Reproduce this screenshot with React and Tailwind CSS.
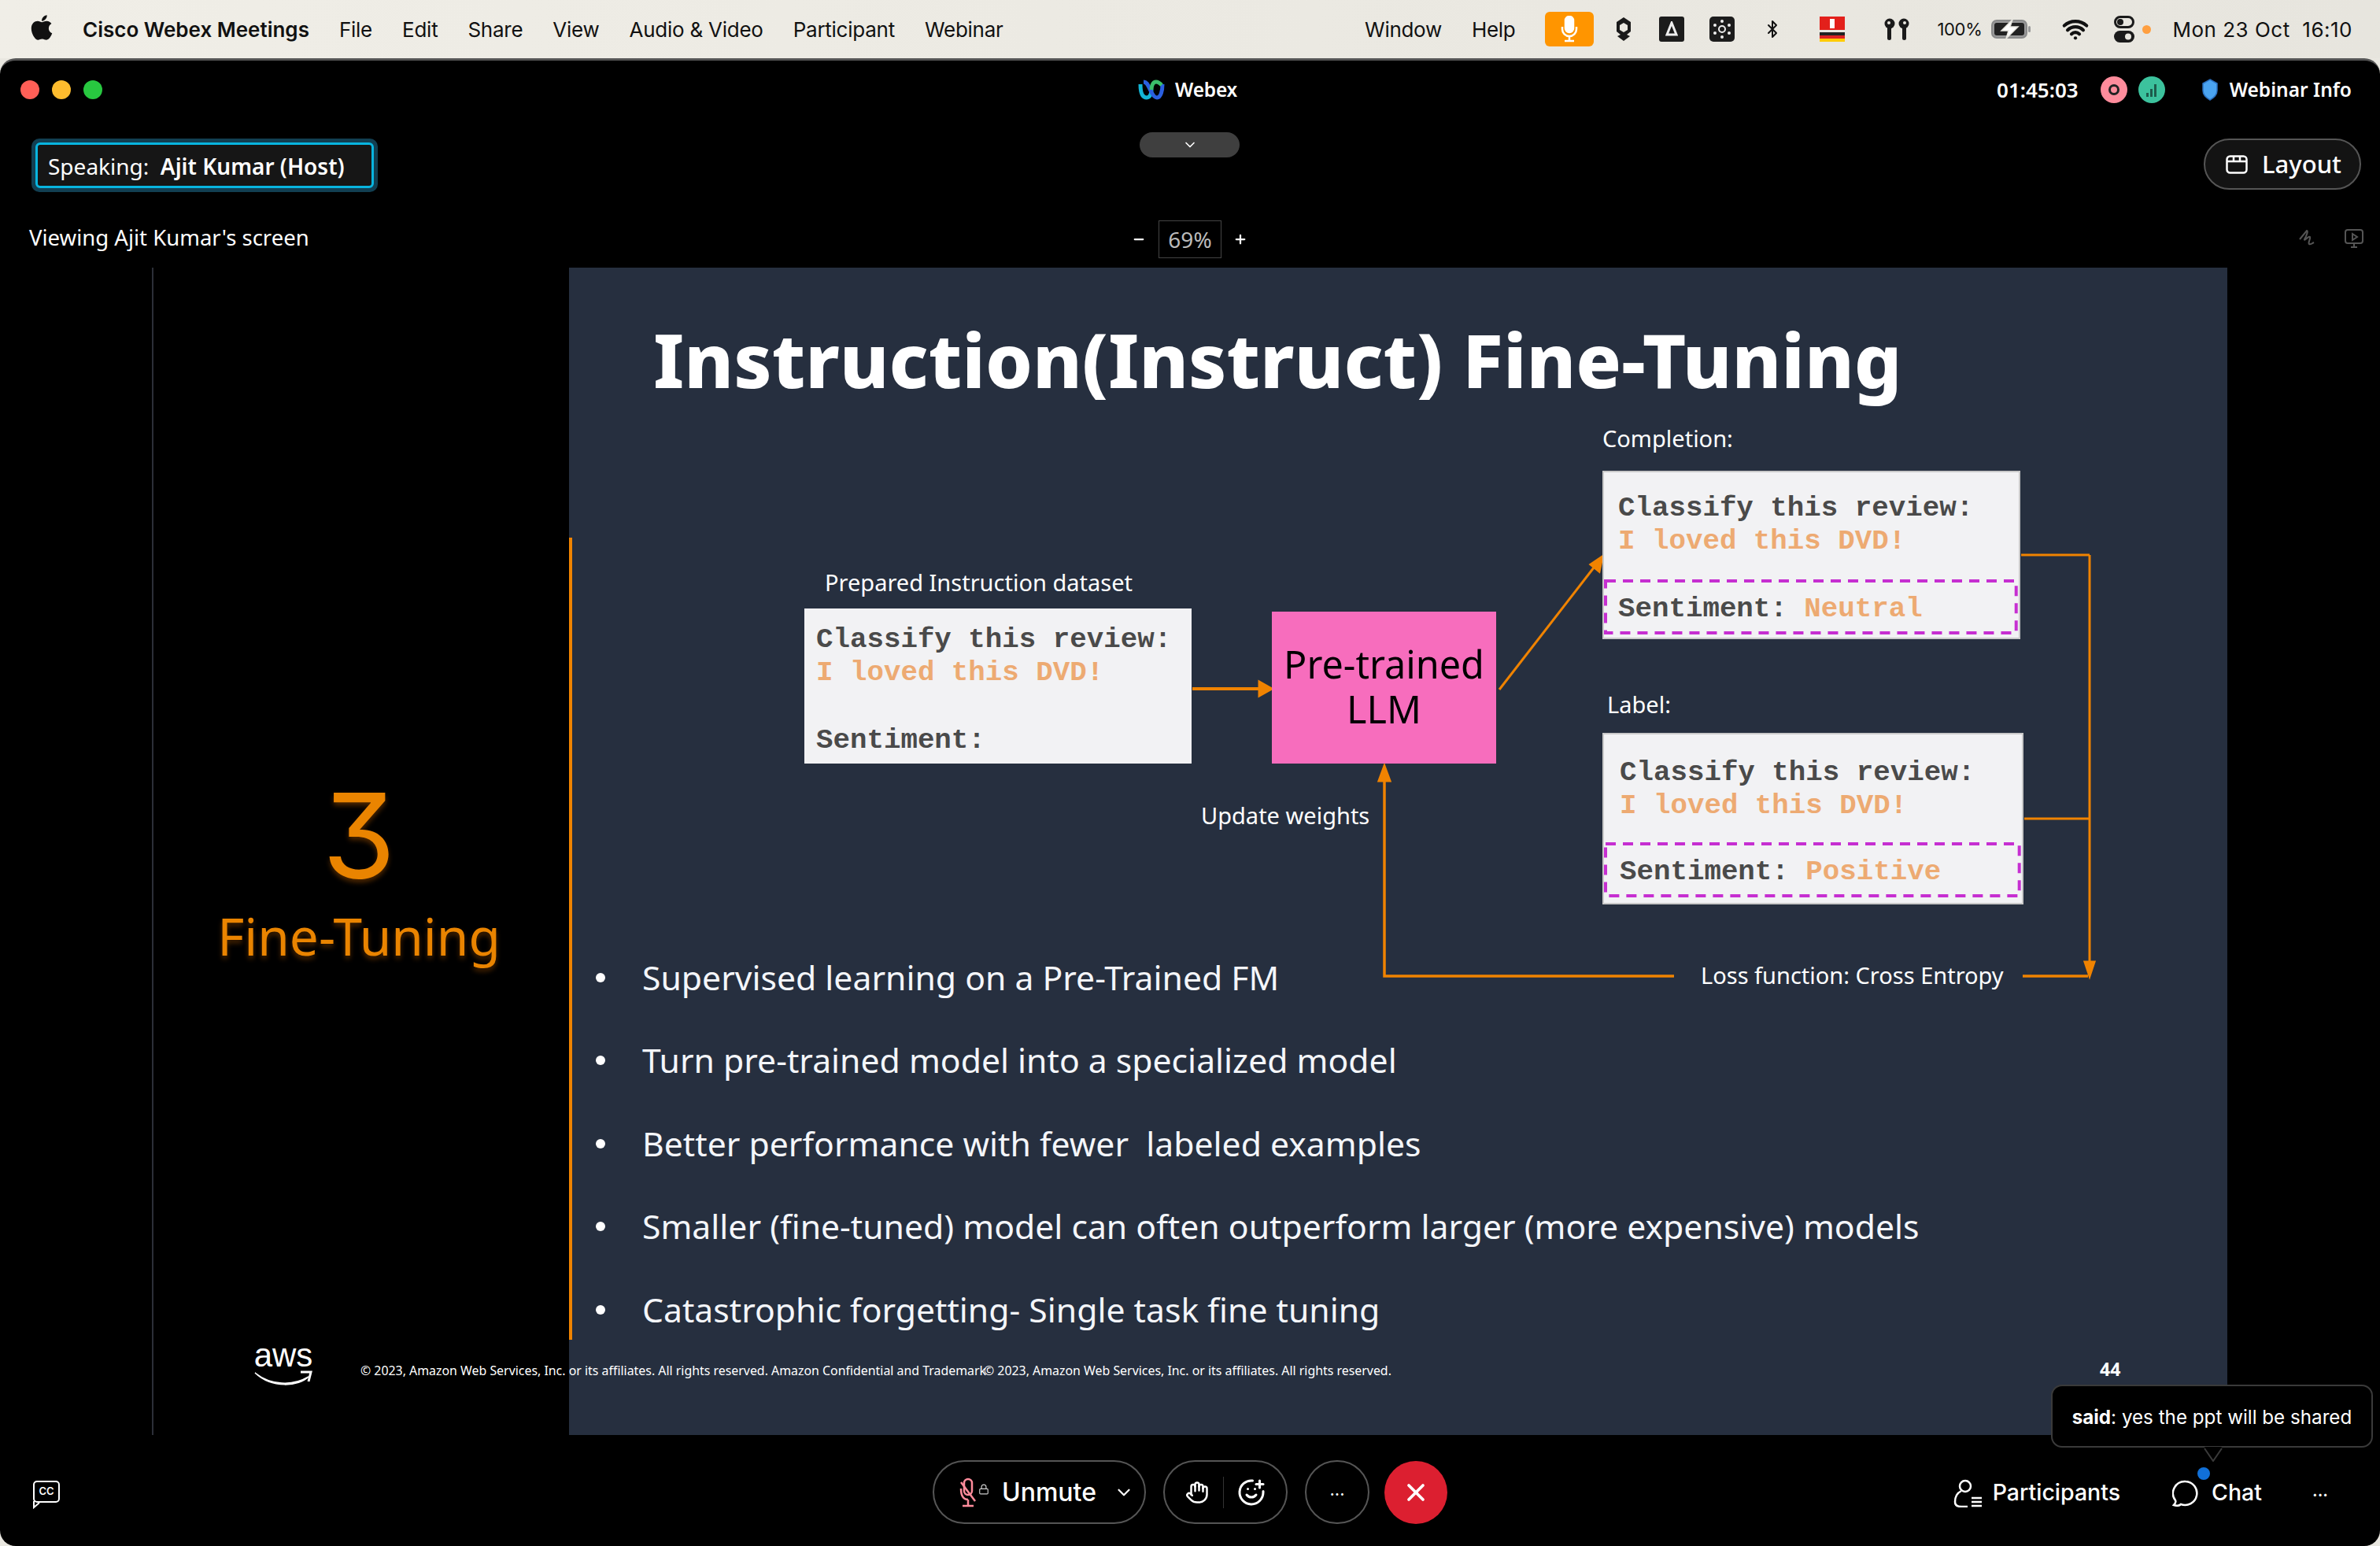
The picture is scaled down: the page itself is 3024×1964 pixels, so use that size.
import React from 'react';
import { FaApple } from 'react-icons/fa';
import { Bluetooth, ChevronDown, Hand, Lock, Minus, Plus, SmilePlus, Wifi, X } from 'lucide-react';

const ui = "font-['Inter','Liberation_Sans',sans-serif]";
const slideFont = "font-['Noto_Sans','Open_Sans',sans-serif]";

const menuItems = ['File', 'Edit', 'Share', 'View', 'Audio & Video', 'Participant', 'Webinar'];

const bullets = [
  'Supervised learning on a Pre-Trained FM',
  'Turn pre-trained model into a specialized model',
  'Better performance with fewer  labeled examples',
  'Smaller (fine-tuned) model can often outperform larger (more expensive) models',
  'Catastrophic forgetting- Single task fine tuning',
];

function MenuBar() {
  return (
    <div className={`${ui} h-[74px] flex items-center bg-gradient-to-r from-[#f0eee7] to-[#e7e5de] text-[#111] text-[26px] pl-[37px] pr-[35px]`}>
      <FaApple className="w-[32px] h-[36px] -mt-[4px]" />
      <span className="ml-[36px] font-semibold">Cisco Webex Meetings</span>
      <div className="flex gap-[38px] ml-[38px] tracking-[-0.25px]">
        {menuItems.map((m) => (
          <span key={m}>{m}</span>
        ))}
      </div>
      <div className="ml-auto flex items-center tracking-[-0.3px]">
        <span>Window</span>
        <span className="ml-[38px]">Help</span>
        <div className="ml-[38px] w-[62px] h-[44px] rounded-[6px] bg-[#ff9500] flex items-center justify-center">
          <svg width="24" height="34" viewBox="0 0 24 34" fill="none" stroke="#fff" strokeWidth="2.5">
            <rect x="7" y="1" width="10" height="20" rx="5" fill="#fff" />
            <path d="M3 14v3a9 9 0 0 0 18 0v-3M12 26v6M6 32h12" />
          </svg>
        </div>
        <svg className="ml-[26px]" width="24" height="32" viewBox="0 0 24 32">
          <path d="M12 1 21 7v12l-5 4 4 2-8 6-8-6 4-2-5-4V7z" fill="#1a1a1a" />
          <path d="M12 8l5 3v6l-5 3-5-3v-6z" fill="#e9e7e0" />
        </svg>
        <div className="ml-[33px] w-[32px] h-[32px] rounded-[3px] bg-[#1c1c1c] flex items-center justify-center">
          <svg width="16" height="20" viewBox="0 0 16 20">
            <path d="M8 2 14 17H2z" fill="none" stroke="#eee" strokeWidth="3" />
          </svg>
        </div>
        <div className="ml-[32px] w-[32px] h-[32px] rounded-[5px] bg-[#1c1c1c] flex items-center justify-center">
          <svg width="26" height="26" viewBox="0 0 26 26" fill="#eee">
            <circle cx="13" cy="13" r="4" fill="none" stroke="#eee" strokeWidth="2" />
            <circle cx="13" cy="3" r="2" />
            <circle cx="13" cy="23" r="2" />
            <circle cx="4" cy="8" r="2" />
            <circle cx="22" cy="8" r="2" />
            <circle cx="4" cy="18" r="2" />
            <circle cx="22" cy="18" r="2" />
          </svg>
        </div>
        <Bluetooth className="ml-[36px] w-[24px] h-[32px]" strokeWidth={2} />
        <div className="ml-[48px] w-[32px] h-[32px] flex flex-col">
          <div className="h-[17px] bg-[#e3201b] flex items-center justify-center">
            <div className="w-[6px] h-[12px] bg-white" />
          </div>
          <div className="h-[3px]" />
          <div className="h-[4px] bg-[#222]" />
          <div className="h-[4px] bg-[#d22]" />
          <div className="h-[4px] bg-[#fc0]" />
        </div>
        <svg className="ml-[48px]" width="36" height="28" viewBox="0 0 36 28" fill="#1a1a1a">
          <circle cx="9" cy="7" r="6.5" />
          <rect x="6" y="8" width="5" height="20" rx="2.5" />
          <circle cx="27" cy="7" r="6.5" />
          <rect x="25" y="8" width="5" height="20" rx="2.5" />
          <circle cx="8" cy="6" r="2" fill="#e9e7e0" />
          <circle cx="28" cy="6" r="2" fill="#e9e7e0" />
        </svg>
        <span className="ml-[33px] text-[22px]">100%</span>
        <svg className="ml-[12px]" width="50" height="24" viewBox="0 0 50 24">
          <rect x="1" y="1" width="44" height="22" rx="6" fill="#999" stroke="#8a8a8a" strokeWidth="2" />
          <rect x="4" y="4" width="38" height="16" rx="3" fill="#222" />
          <path d="M27 0 13 14h9l-3 10 15-15h-10z" fill="#fff" stroke="#e8e6df" strokeWidth="1.5" />
          <rect x="47" y="8" width="3" height="8" rx="1.5" fill="#999" />
        </svg>
        <Wifi className="ml-[38px] w-[38px] h-[34px]" strokeWidth={3} />
        <svg className="ml-[30px]" width="26" height="34" viewBox="0 0 26 34">
          <rect x="1.5" y="1.5" width="23" height="13" rx="6.5" fill="none" stroke="#1a1a1a" strokeWidth="3" />
          <circle cx="8" cy="8" r="4" fill="#1a1a1a" />
          <rect x="0" y="19" width="26" height="15" rx="7.5" fill="#1a1a1a" />
          <circle cx="18" cy="26.5" r="4" fill="#e9e7e0" />
        </svg>
        <div className="ml-[10px] w-[11px] h-[11px] rounded-full bg-[#ff9f40]" />
        <span className="ml-[27px] whitespace-pre tracking-[0.5px]">Mon 23 Oct  16:10</span>
      </div>
    </div>
  );
}

function TitleBar() {
  return (
    <div className="relative h-[74px] flex items-center text-white">
      <div className="flex gap-[16px] ml-[26px]">
        <div className="w-[24px] h-[24px] rounded-full bg-[#ff5f57]" />
        <div className="w-[24px] h-[24px] rounded-full bg-[#febc2e]" />
        <div className="w-[24px] h-[24px] rounded-full bg-[#28c840]" />
      </div>
      <div className="ml-[1316px] flex items-center gap-[13px]">
        <svg width="34" height="26" viewBox="0 0 34 26" fill="none" strokeWidth="5">
          <path d="M3 6c0 12 3 17 8 17s6-7 6-10" stroke="#13b5d6" />
          <path d="M7 3c5 0 6 6 10 13 2 4 4 7 7 7 5 0 7-9 7-17" stroke="#2a5fe0" />
          <path d="M17 13c0-3 1-10 6-10 3 0 5 2 7 4" stroke="#3bbf6a" />
        </svg>
        <span className="text-[24.5px] font-semibold tracking-[-0.2px]">Webex</span>
      </div>
      <div className="ml-auto mr-[36px] flex items-center">
        <span className="text-[26px] font-semibold">01:45:03</span>
        <div className="ml-[28px] w-[34px] h-[34px] rounded-full bg-[#ff8c9c] flex items-center justify-center">
          <div className="w-[14px] h-[14px] rounded-full border-[3px] border-[#222]" />
        </div>
        <div className="ml-[14px] w-[34px] h-[34px] rounded-full bg-[#3cc29d] flex items-end justify-center gap-[2px] pb-[8px]">
          <div className="w-[3px] h-[5px] bg-[#1d5c4c]" />
          <div className="w-[3px] h-[10px] bg-[#1d5c4c]" />
          <div className="w-[3px] h-[16px] bg-[#1d5c4c]" />
        </div>
        <svg className="ml-[46px]" width="22" height="28" viewBox="0 0 22 28">
          <path d="M11 1 20 6v9c0 6-4 9-9 12-5-3-9-6-9-12V6z" fill="#4aa3f0" stroke="#2a6fc0" strokeWidth="1.5" />
        </svg>
        <span className="ml-[14px] text-[24.5px] font-semibold">Webinar Info</span>
      </div>
    </div>
  );
}

function ToolRow() {
  return (
    <div className="relative h-[85px] text-white">
      <div className="absolute left-[40px] top-[25px] w-[440px] h-[68px] rounded-[10px] bg-[#123f52] p-[5px]">
        <div className="h-full rounded-[6px] border-[3px] border-[#08b5e0] bg-[#161616] flex items-center pl-[13px] pt-[2px] text-[28px] whitespace-pre">
          Speaking:  <span className="font-semibold">Ajit Kumar (Host)</span>
        </div>
      </div>
      <div className="absolute left-[1448px] top-[17px] w-[127px] h-[32px] rounded-full bg-[#3f3f3f] flex items-center justify-center">
        <ChevronDown className="w-[20px] h-[20px] text-white" strokeWidth={2} />
      </div>
      <div className="absolute right-[24px] top-[25px] w-[200px] h-[65px] rounded-full border-2 border-[#555] bg-[#131313] flex items-center justify-center gap-[18px] pl-[3px]">
        <svg width="28" height="24" viewBox="0 0 28 24" fill="none" stroke="#fff" strokeWidth="2.5">
          <rect x="1.5" y="1.5" width="25" height="21" rx="4" />
          <path d="M1.5 8h25M10 1.5V8M18 1.5V8" />
        </svg>
        <span className="text-[31px] font-medium">Layout</span>
      </div>
    </div>
  );
}

function ZoomRow() {
  return (
    <div className="relative h-[104px] flex items-center text-white pt-[28px]">
      <span className="ml-[37px] text-[27.5px]">Viewing Ajit Kumar's screen</span>
      <div className="absolute left-[1438px] top-[44px] flex items-center">
        <Minus className="w-[18px] h-[18px]" strokeWidth={3} />
        <div className="ml-[16px] w-[80px] h-[48px] border border-[#444] flex items-center justify-center text-[28px] text-[#bbb]">
          69%
        </div>
        <Plus className="ml-[15px] w-[18px] h-[18px]" strokeWidth={3} />
      </div>
      <div className="absolute right-[20px] top-[54px] flex items-center gap-[34px]">
        <svg width="24" height="26" viewBox="0 0 24 26" fill="none" stroke="#555" strokeWidth="2">
          <path d="M2 14 11 3c2 0 0 6-3 11-1 3 6-5 7-3 1 3-3 7-1 9 2 1 4-1 6-2" />
        </svg>
        <svg width="26" height="26" viewBox="0 0 26 26" fill="none" stroke="#555" strokeWidth="2">
          <rect x="2" y="2" width="22" height="17" rx="3" />
          <path d="M9 24h8M13 19v5M11 7l6 4-6 4z" />
        </svg>
      </div>
    </div>
  );
}

function MonoBox({ className, children }) {
  return (
    <div className={`absolute bg-[#f2f2f4] font-['Liberation_Mono',monospace] font-bold text-[35.8px] leading-[42px] text-[#4a4a4a] whitespace-pre ${className}`}>
      {children}
    </div>
  );
}

function DashedLine({ className, label, value }) {
  return (
    <div className={`relative h-[70px] flex items-center pt-[6px] ${className}`}>
      <svg className="absolute left-0 top-0 w-full h-full" fill="none" stroke="#c62fd1" strokeWidth="4">
        <rect x="2" y="2" width="99%" height="66" strokeDasharray="13 9" />
      </svg>
      {label}
      <span className="text-[#edaa72]">{value}</span>
    </div>
  );
}

function Diagram() {
  return (
    <div className="relative h-[669px] text-white text-[29px]">
      <svg className="absolute left-0 top-0 overflow-visible" width="2107" height="760" viewBox="0 0 2107 760" fill="none" stroke="#f08300" strokeWidth="3">
        <path d="M792 355H880" strokeWidth="4" />
        <path d="M893 355 877 346v18z" fill="#f08300" />
        <path d="M1182 356 1306 196" />
        <path d="M1313 187 1298 197 1309 206z" fill="#f08300" />
        <path d="M1845 185H1932M1849 520H1932M1932 185V708" />
        <path d="M1932 720 1926 702H1938z" fill="#f08300" />
        <path d="M1847 720H1930" strokeWidth="3.5" />
        <path d="M1404 720H1036V470" strokeWidth="3.5" />
        <path d="M1036 453 1029 472H1043z" fill="#f08300" />
      </svg>

      <span className="absolute left-[325px] top-[198px]">Prepared Instruction dataset</span>
      <span className="absolute left-[1313px] top-[15px]">Completion:</span>
      <span className="absolute left-[1319px] top-[353px]">Label:</span>
      <span className="absolute left-[803px] top-[494px]">Update weights</span>
      <span className="absolute left-[1438px] top-[697px]">Loss function: Cross Entropy</span>

      <MonoBox className="left-[299px] top-[253px] w-[492px] h-[197px] pl-[15px] pt-[19px]">
        <div>Classify this review:</div>
        <div className="text-[#edaa72]">I loved this DVD!</div>
        <div className="mt-[44px]">Sentiment:</div>
      </MonoBox>

      <div className={`absolute left-[893px] top-[257px] w-[285px] h-[193px] bg-[#f76dbd] text-black text-[48.5px] leading-[57px] flex flex-col items-center justify-center pb-[4px] ${slideFont}`}>
        <span>Pre-trained</span>
        <span>LLM</span>
      </div>

      <MonoBox className="left-[1313px] top-[78px] w-[531px] h-[214px] border-2 border-[#c9c9c9] pt-[25px]">
        <div className="pl-[18px]">Classify this review:</div>
        <div className="pl-[18px] text-[#edaa72]">I loved this DVD!</div>
        <DashedLine className="mt-[27px] pl-[18px]" label="Sentiment: " value="Neutral" />
      </MonoBox>

      <MonoBox className="left-[1313px] top-[411px] w-[535px] h-[218px] border-2 border-[#c9c9c9] pt-[28px]">
        <div className="pl-[20px]">Classify this review:</div>
        <div className="pl-[20px] text-[#edaa72]">I loved this DVD!</div>
        <DashedLine className="mt-[25px] pl-[20px]" label="Sentiment: " value="Positive" />
      </MonoBox>
    </div>
  );
}

function Slide() {
  return (
    <div className={`relative w-[2107px] bg-[#262f3f] flex flex-col ${slideFont}`}>
      <div className="h-[180px] pl-[107px] pt-[52px] text-white text-[95.3px] font-extrabold leading-[128px] whitespace-nowrap">
        Instruction(Instruct) Fine-Tuning
      </div>
      <Diagram />
      <div className="flex flex-col text-[#f4f6fa] text-[42.7px]">
        {bullets.map((b) => (
          <div key={b} className="h-[105.5px] flex items-center whitespace-pre">
            <div className="ml-[34px] w-[12px] h-[12px] rounded-full bg-white" />
            <span className="ml-[47px]">{b}</span>
          </div>
        ))}
      </div>
      <span className="absolute left-[1945px] top-[1382px] text-white text-[23px] font-bold">44</span>
    </div>
  );
}

function LeftPanel() {
  return (
    <div className={`relative w-[723px] ${slideFont}`}>
      <div className="absolute left-[193px] top-0 bottom-0 w-[2px] bg-[#2c2f38]" />
      <div className="absolute -right-[4px] top-[343px] h-[1019px] w-[4px] bg-[#f08300] z-10" />
      <div className="ml-[193px] h-full flex flex-col items-center text-[#ea8400] pt-[622px] pr-[4px] [text-shadow:0_4px_6px_rgba(160,80,0,0.5)]">
        <div className="font-['Inter',sans-serif] [font-feature-settings:'cv09'] text-[150px] leading-[200px]">3</div>
        <div className="text-[65.7px] leading-[88px] -mt-[17px]">Fine-Tuning</div>
      </div>
    </div>
  );
}

function BottomBar() {
  return (
    <div className={`${ui} relative flex-1 flex items-center text-white pt-[6px]`}>
      <div className="relative ml-[42px] -mt-[3px] w-[34px] h-[28px] rounded-[5px] border-2 border-white flex items-center justify-center text-[13px] font-semibold">
        CC
        <svg className="absolute left-[-2px] top-[24px]" width="12" height="10" viewBox="0 0 12 10" fill="none" stroke="#fff" strokeWidth="2">
          <path d="M1 0v8l7-6" />
        </svg>
      </div>
      <div className="absolute left-[1185px] top-[32px] h-[81px] flex items-center gap-[22px]">
        <div className="w-[271px] h-full rounded-full border-2 border-[#555] flex items-center pl-[32px]">
          <svg width="26" height="38" viewBox="0 0 26 38" fill="none" stroke="#ff8c9c" strokeWidth="2.5">
            <rect x="6" y="2" width="10" height="20" rx="5" />
            <path d="M2 14c0 9 3 14 9 14M11 28v7M4 36h14M2 6l18 24" />
          </svg>
          <Lock className="w-[14px] h-[18px] text-[#ccc] -ml-[2px] -mt-[8px]" strokeWidth={2} />
          <span className="ml-[16px] text-[32px] font-medium">Unmute</span>
          <ChevronDown className="ml-[22px] w-[26px] h-[26px]" strokeWidth={2} />
        </div>
        <div className="w-[158px] h-full rounded-full border-2 border-[#555] flex items-center justify-between px-[26px]">
          <Hand className="w-[30px] h-[32px]" strokeWidth={2} />
          <div className="w-[1px] h-[40px] bg-[#333]" />
          <SmilePlus className="w-[36px] h-[36px]" strokeWidth={2} />
        </div>
        <div className="w-[82px] h-full rounded-full border-2 border-[#555] flex items-center justify-center text-[22px] leading-none pb-[8px]">
          ...
        </div>
        <div className="w-[80px] h-[80px] rounded-full bg-[#dc1f30] flex items-center justify-center -ml-[3px]">
          <X className="w-[36px] h-[36px]" strokeWidth={2.5} />
        </div>
      </div>
      <div className="ml-auto mr-[66px] flex items-center text-[28.5px] font-medium">
        <svg width="38" height="36" viewBox="0 0 38 36" fill="none" stroke="#fff" strokeWidth="2.5">
          <circle cx="15" cy="9" r="7" />
          <path d="M10 15C4 18 2 24 2 29c0 4 3 6 8 6h8M23 24h13M23 29h13M23 34h13" />
        </svg>
        <span className="ml-[12px]">Participants</span>
        <svg className="ml-[66px]" width="34" height="34" viewBox="0 0 34 34" fill="none" stroke="#fff" strokeWidth="2.5">
          <path d="M17 2a15 15 0 1 1-6 29c-2 2-6 2-9 1 2-2 3-4 2-6A15 15 0 0 1 17 2z" />
        </svg>
        <span className="ml-[16px]">Chat</span>
        <span className="ml-[64px] text-[22px] leading-none pb-[8px]">...</span>
      </div>
      <div className="absolute left-[2792px] top-[41px] w-[16px] h-[16px] rounded-full bg-[#1170d8]" />
    </div>
  );
}

function ChatToast() {
  return (
    <div className={`${ui} absolute left-[2606px] top-[1682px] w-[409px] h-[80px] rounded-[14px] border-2 border-[#3a3a3a] bg-black flex items-center justify-center pt-[4px] text-[24.2px] text-white`}>
      <span className="whitespace-pre"><span className="font-bold">said</span>: yes the ppt will be shared</span>
      <svg className="absolute left-[192px] top-[76px]" width="24" height="20" viewBox="0 0 24 20">
        <path d="M1 1h22L12 19z" fill="#000" />
        <path d="M1 3 12 19 23 3" fill="none" stroke="#3a3a3a" strokeWidth="2" />
      </svg>
    </div>
  );
}

export default function App() {
  return (
    <div className="w-[3024px] h-[1964px] bg-[#e9e7e0] flex flex-col overflow-hidden">
      <MenuBar />
      <div className="relative flex-1 flex flex-col bg-black rounded-[20px] border-t-[3px] border-[#555]">
        <TitleBar />
        <ToolRow />
        <ZoomRow />
        <div className="h-[1483px] flex">
          <LeftPanel />
          <Slide />
        </div>
        <BottomBar />
        <div className={`${slideFont} absolute left-[458px] top-[1653px] text-white text-[15.9px] whitespace-nowrap`}>
          © 2023, Amazon Web Services, Inc. or its affiliates. All rights reserved. Amazon Confidential and Trademark
        </div>
        <div className={`${slideFont} absolute left-[1250px] top-[1653px] text-white text-[15.9px] whitespace-nowrap`}>
          © 2023, Amazon Web Services, Inc. or its affiliates. All rights reserved.
        </div>
        <div className="absolute left-[322px] top-[1626px] w-[76px] flex flex-col items-center text-white">
          <span className="font-['Liberation_Sans',sans-serif] text-[42px] leading-[38px]">aws</span>
          <svg width="76" height="22" viewBox="0 0 76 22" fill="none">
            <path d="M2 3c20 16 48 17 68 5-12 12-46 16-68-5z" fill="#fff" stroke="#fff" strokeWidth="1.5" />
            <path d="M60 2h13l-3 12" stroke="#fff" strokeWidth="3" />
          </svg>
        </div>
        <ChatToast />
      </div>
    </div>
  );
}
